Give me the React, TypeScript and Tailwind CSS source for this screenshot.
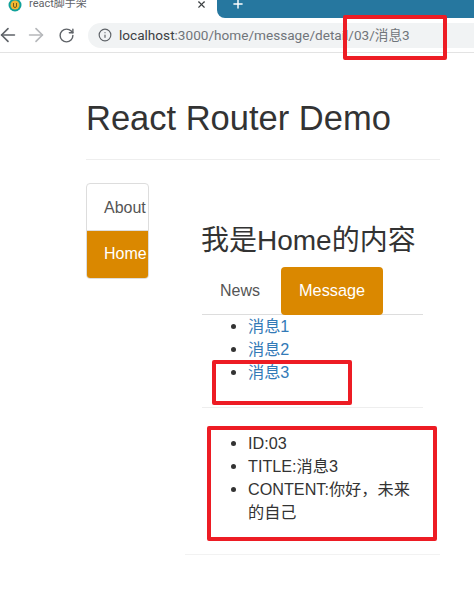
import { ArrowLeft, ArrowRight, Info, Plus, RotateCw, X } from "lucide-react";

const RedBox = ({ className }: { className: string }) => (
  <div className={`absolute border-[4px] border-[#ed1c24] rounded-[2px] ${className}`} />
);

const App = () => {
  return (
    <div className="relative w-[474px] h-[594px] overflow-hidden bg-white text-[#333333] font-['Liberation_Sans','Noto_Sans_CJK_SC',sans-serif]">
      {/* tab strip */}
      <div className="flex h-[18px] overflow-hidden">
        <div className="flex w-[217px] items-center pl-[8px] pr-[10px]">
          <svg width="14" height="14" viewBox="0 0 14 14" className="-mt-[9px] shrink-0">
            <circle cx="7" cy="7" r="6.5" fill="#10a19a" />
            <circle cx="7" cy="7" r="4.5" fill="#f2b632" />
            <path d="M5.5 5v3a1.5 1.5 0 0 0 3 0V5" stroke="#7a5a10" strokeWidth="1" fill="none" />
          </svg>
          <span className="ml-[7px] -mt-[10px] text-[11px] leading-[14px] text-[#5f6368] font-['Roboto','Noto_Sans_CJK_SC',sans-serif]">react脚手架</span>
          <X size={11} strokeWidth={2.5} className="ml-auto -mt-[10px] text-[#3c4043]" />
        </div>
        <div className="flex flex-1 items-start rounded-bl-[8px] bg-[#26779f] pl-[14px]">
          <Plus size={14} strokeWidth={2.5} className="-mt-[3px] text-white" />
        </div>
      </div>

      {/* toolbar */}
      <div className="flex h-[35px] items-center border-b border-[#e3e3e3]">
        <div className="flex w-[88px] items-center">
          <ArrowLeft size={22} strokeWidth={1.8} className="-ml-[3px] text-[#5f6368]" />
          <ArrowRight size={22} strokeWidth={1.8} className="ml-[6px] text-[#b6b8bb]" />
          <RotateCw size={17} strokeWidth={2} className="ml-[11px] text-[#5f6368]" />
        </div>
        <div className="flex h-[25px] flex-1 items-center rounded-l-full bg-[#f1f3f4] pl-[10px]">
          <Info size={14} className="text-[#5f6368]" />
          <span className="ml-[7px] whitespace-nowrap text-[13.6px] text-[#70757a] font-['Roboto','Noto_Sans_CJK_SC',sans-serif]">
            <span className="text-[#3c4043]">localhost</span>:3000/home/message/detail/03/消息3
          </span>
        </div>
      </div>

      {/* page */}
      <div className="ml-[86px] w-[354px]">
        <div className="border-b border-[#eeeeee] pt-[45px] pb-[21px]">
          <h1 className="text-[34.5px] leading-[40px]">React Router Demo</h1>
        </div>

        <div className="mt-[23px] flex">
          {/* left nav */}
          <div className="h-[96px] w-[63px] shrink-0 overflow-hidden rounded-[4px] border border-[#dddddd]">
            <div className="h-[47px] whitespace-nowrap border-b border-[#dddddd] pl-[17px] text-[16px] leading-[47px] text-[#555555]">About</div>
            <div className="h-[47px] whitespace-nowrap bg-[#da8800] pl-[17px] text-[16px] leading-[45px] text-white">Home</div>
          </div>

          <div className="ml-[53px] flex-1">
            <div className="w-[221px]">
              <h2 className="-ml-px mt-[39px] whitespace-nowrap text-[28px] leading-[38px]">我是Home的内容</h2>
              <div className="mt-[7px] flex h-[48px] border-b border-[#dddddd]">
                <div className="px-[18px] text-[16px] leading-[47px] text-[#555555]">News</div>
                <div className="ml-[3px] h-[48px] rounded-[4px] bg-[#da8800] px-[18px] text-[16.3px] leading-[47px] text-white">Message</div>
              </div>
              <ul className="list-disc pl-[46px] text-[16.2px] leading-[23px] text-[#337ab7] marker:text-[#333333]">
                <li>消息1</li>
                <li>消息2</li>
                <li>消息3</li>
              </ul>
              <div className="mt-[23px] border-b border-[#eeeeee]" />
              <ul className="mt-[24px] list-disc pl-[46px] text-[16.2px] leading-[23px]">
                <li>ID:03</li>
                <li>TITLE:消息3</li>
                <li>CONTENT:你好，未来的自己</li>
              </ul>
            </div>
          </div>
        </div>
      </div>
      <div className="ml-[185px] mt-[30px] h-px w-[255px] bg-[#f2f2f2]" />

      {/* annotation boxes */}
      <RedBox className="left-[343px] top-[15px] h-[45px] w-[104px]" />
      <RedBox className="left-[212px] top-[360px] h-[45px] w-[140px]" />
      <RedBox className="left-[207px] top-[426px] h-[115px] w-[230px]" />
    </div>
  );
};

export default App;
